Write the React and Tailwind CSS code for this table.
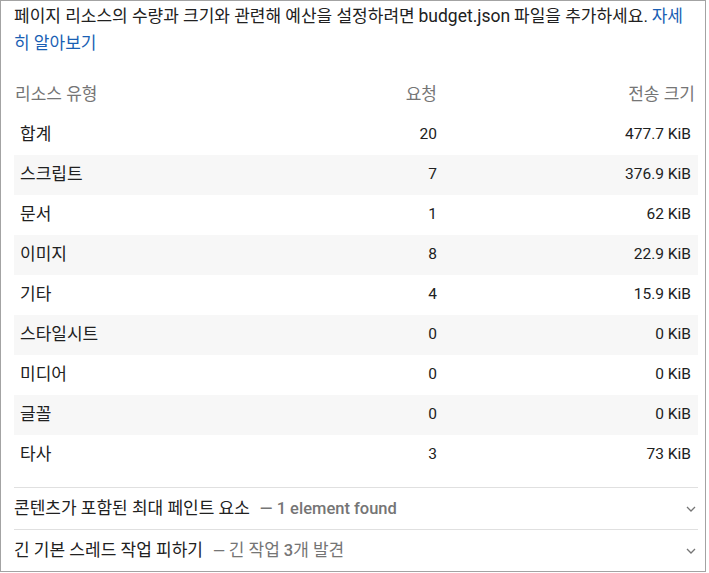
import React from "react";

const rows = [
  ["합계", "20", "477.7 KiB"],
  ["스크립트", "7", "376.9 KiB"],
  ["문서", "1", "62 KiB"],
  ["이미지", "8", "22.9 KiB"],
  ["기타", "4", "15.9 KiB"],
  ["스타일시트", "0", "0 KiB"],
  ["미디어", "0", "0 KiB"],
  ["글꼴", "0", "0 KiB"],
  ["타사", "3", "73 KiB"],
];

function K({ children, className = "" }) {
  return <span className={"text-[17px] " + className}>{children}</span>;
}

function Chevron() {
  return (
    <svg width="10" height="6" viewBox="0 0 10 6" className="text-[#757575]">
      <path d="M1 1l4 4 4-4" fill="none" stroke="currentColor" strokeWidth="1.3" />
    </svg>
  );
}

export default function App() {
  return (
    <div
      className="w-[706px] h-[572px] border border-[#a3a3a3] bg-white text-[#212121] text-[15.5px] overflow-hidden"
      style={{ fontFamily: 'Roboto, "Noto Sans CJK KR", sans-serif' }}
    >
      <div className="pl-[13px] pr-[8px] pt-[2px]">
        <p className="leading-[26px] h-[52px] overflow-hidden">
          <span className="whitespace-nowrap">
            <K>페이지 리소스의 수량과 크기와 관련해 예산을 설정하려면</K>{" "}
            <span className="text-[17.5px]">budget.json</span> <K>파일을 추가하세요.</K>{" "}
            <a className="text-[#1a5fb4]">
              <K>자세</K>
            </a>
          </span>
          <br />
          <a className="text-[#1a5fb4]">
            <K>히 알아보기</K>
          </a>
        </p>

        <div className="mt-[20px] w-[684px]">
          <div className="grid grid-cols-[1fr_100px_258px] h-[40px] items-center pl-[1px] pr-[3px] text-[#757575]">
            <div>
              <K>리소스 유형</K>
            </div>
            <div className="text-right">
              <K>요청</K>
            </div>
            <div className="text-right">
              <K>전송 크기</K>
            </div>
          </div>
          {rows.map((r, i) => (
            <div
              key={r[0]}
              className={
                "grid grid-cols-[1fr_100px_254px] h-[40px] items-center pl-[6px] pr-[7px] " +
                (i % 2 === 1 ? "bg-[#f7f7f7]" : "bg-white")
              }
            >
              <div>
                <K>{r[0]}</K>
              </div>
              <div className="text-right">{r[1]}</div>
              <div className="text-right">{r[2]}</div>
            </div>
          ))}
        </div>

        <div className="mt-[12px] w-[684px]">
          <div className="border-t border-[#e0e0e0] h-[42px] flex items-center justify-between pr-[2px]">
            <div className="leading-[20px]">
              <K>콘텐츠가 포함된 최대 페인트 요소</K>
              <span className="ml-[10px] text-[#757575] font-medium text-[16.5px]">— 1 element found</span>
            </div>
            <Chevron />
          </div>
          <div className="border-t border-[#e0e0e0] h-[42px] flex items-center justify-between pr-[2px]">
            <div className="leading-[20px]">
              <K>긴 기본 스레드 작업 피하기</K>
              <span className="ml-[10px] text-[#757575]">
                <span className="font-medium">—</span> <K>긴 작업</K>{" "}
                <span className="font-medium text-[16.5px]">3</span>
                <K>개 발견</K>
              </span>
            </div>
            <Chevron />
          </div>
        </div>
      </div>
    </div>
  );
}
